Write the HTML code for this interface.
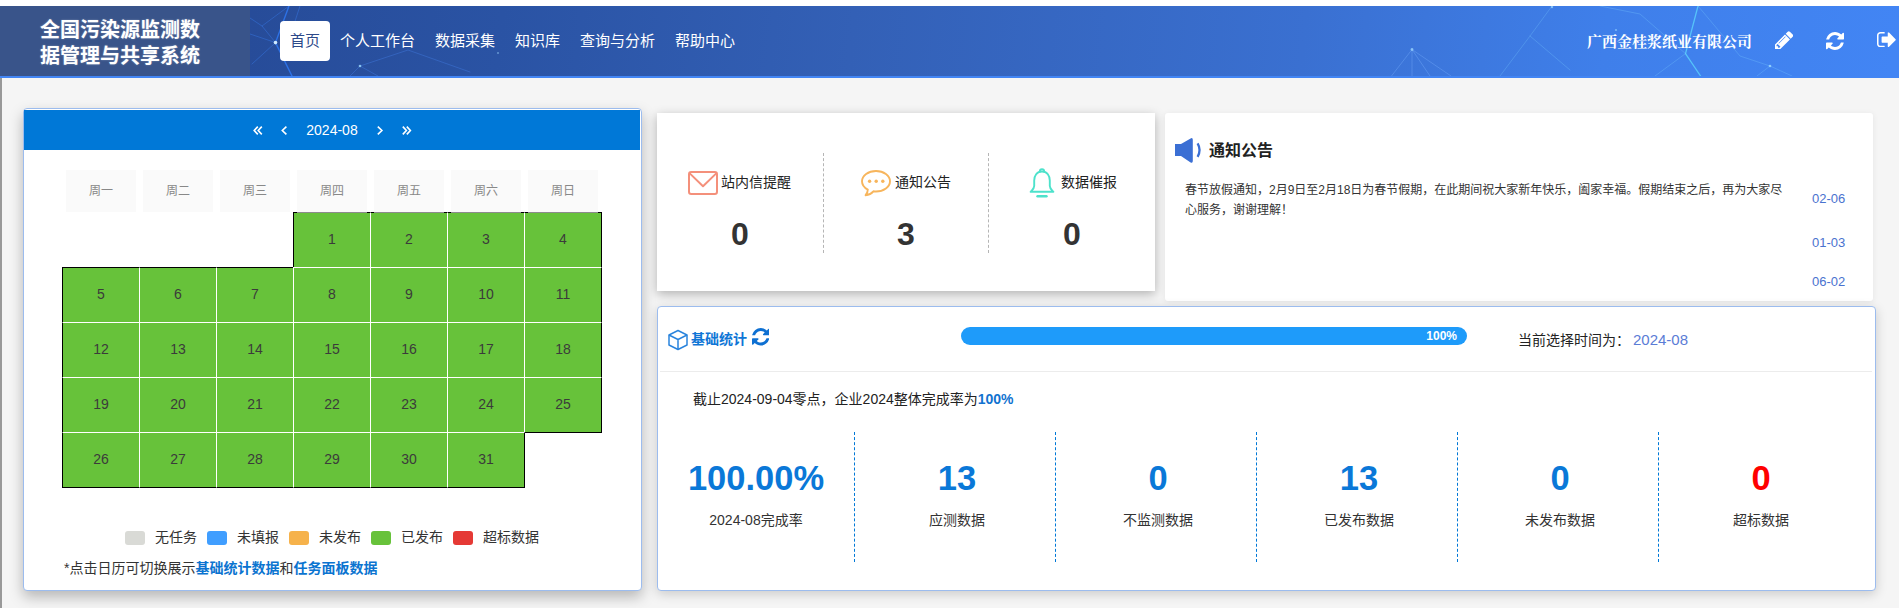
<!DOCTYPE html>
<html lang="zh-CN"><head><meta charset="utf-8"><title>全国污染源监测数据管理与共享系统</title>
<style>
*{box-sizing:border-box}
html,body{margin:0;padding:0}
body{width:1899px;height:608px;overflow:hidden;position:relative;background:#f5f5f5;
 font-family:"Liberation Sans","Noto Sans CJK SC",sans-serif;font-size:14px;color:#333}
.abs{position:absolute}
.topstrip{left:0;top:0;width:1899px;height:6px;background:#fff}
.header{left:0;top:6px;width:1899px;height:72px;border-bottom:2px solid #4285f4;
 background:linear-gradient(96deg,#274c99 250px,#2a53a4 500px,#3360b6 850px,#3a70d1 1300px,#3f7fea 1600px,#4285f4 1890px);overflow:hidden}
.logo{left:0;top:0;width:250px;height:70px;background:#39548a;color:#fff;font-weight:bold;font-size:20px;line-height:26px;
 padding:10.5px 0 0 40px;text-shadow:0 0 2px rgba(255,255,255,.35)}
.nav{top:15px;height:40px;line-height:40px;font-size:15px;color:#fff;text-align:center;white-space:nowrap}
.nav.on{background:#fff;color:#2d4a8a;border-radius:4px}
.company{left:1587px;top:24px;height:24px;line-height:24px;font-size:15px;font-weight:bold;color:#fff;white-space:nowrap;
 font-family:"Liberation Serif","Noto Serif CJK SC",serif}
.leftbar{left:0;top:78px;width:2px;height:530px;background:#999}
.cal{left:23px;top:108px;width:619px;height:483px;background:#fff;border:1px solid #9cbcee;border-radius:4px;
 box-shadow:0 6px 14px rgba(0,0,0,.26)}
.calhead{left:24px;top:110px;width:616px;height:40px;background:#0078d7}
.caltitle{left:306px;top:120px;width:52px;height:20px;line-height:20px;font-size:14px;color:#fff;text-align:center}
.wk{top:170px;width:70px;height:42px;line-height:42px;background:#fafafa;color:#888;font-size:12px;text-align:center}
.day{width:77px;height:55px;background:#67c23a;border:0 solid #fff;color:#3b3b3b;font-size:14px;line-height:52px;text-align:center}
.lg{top:531px;width:20px;height:14px;border-radius:3px}
.lgt{top:527px;height:20px;line-height:20px;font-size:14px;color:#333;white-space:nowrap}
.note{left:64px;top:557px;height:22px;line-height:22px;font-size:14px;color:#333;white-space:nowrap}
.note b{color:#0b74d0}
.card1{left:657px;top:113px;width:498px;height:178px;background:#fff;box-shadow:0 3px 10px rgba(0,0,0,.28)}
.vd{top:153px;width:0;height:100px;border-left:1px dashed #b5b5b5}
.c1t{top:171px;height:22px;line-height:22px;font-size:14px;color:#222;white-space:nowrap}
.c1n{top:214px;width:60px;height:40px;line-height:40px;font-size:32px;font-weight:bold;color:#333;text-align:center}
.card2{left:1165px;top:113px;width:708px;height:188px;background:#fff;border-radius:3px;box-shadow:0 1px 6px rgba(0,0,0,.07)}
.c2title{left:1209px;top:138.500px;height:24px;line-height:24px;font-size:16px;font-weight:bold;color:#222;white-space:nowrap}
.c2text{left:1185px;top:179.500px;width:606px;line-height:20px;font-size:12px;color:#333}
.c2d{left:1812px;height:18px;line-height:18px;font-size:13px;color:#4a72cf;white-space:nowrap}
.stat{left:657px;top:306px;width:1219px;height:285px;background:#fff;border:1px solid #9cbcee;border-radius:4px;
 box-shadow:0 3px 12px rgba(0,0,0,.18)}
.sthr{left:660px;top:371px;width:1212px;height:1px;background:#ececec}
.sttitle{left:691px;top:328px;height:22px;line-height:22px;font-size:14px;font-weight:bold;color:#1076d6;white-space:nowrap}
.prog{left:961px;top:327px;width:506px;height:18px;border-radius:9px;background:#1e9bfa}
.progt{left:1420px;top:327px;width:37px;height:18px;line-height:18px;font-size:12px;font-weight:bold;color:#fff;text-align:right}
.curt{left:1518px;top:329px;height:22px;line-height:22px;font-size:14px;color:#222;white-space:nowrap}
.curv{left:1633px;top:329px;height:22px;line-height:22px;font-size:15px;color:#5b7cd6;white-space:nowrap}
.sum{left:693px;top:387.500px;height:22px;line-height:22px;font-size:14px;color:#222;white-space:nowrap}
.sum b{color:#1273d0}
.sd{top:432px;width:0;height:130px;border-left:1px dashed #0078d7}
.sn{top:455.500px;width:200px;height:44px;line-height:44px;font-size:34.500px;font-weight:bold;color:#0a78d8;text-align:center;white-space:nowrap}
.sl{top:509px;width:200px;height:22px;line-height:22px;font-size:14px;color:#333;text-align:center;white-space:nowrap}
</style></head>
<body>
<div class="abs topstrip"></div>
<div class="abs header">
<svg class="abs" style="left:250px;top:0" width="1649" height="70" viewBox="250 0 1649 70">
<g fill="none" stroke-linecap="round">
<path stroke="#2f7dff" stroke-width="1.400" opacity=".75" d="M289 0 L275.500 36.600 L292 70"/>
<path stroke="#3d86ff" stroke-width="1" opacity=".35" d="M275.500 36.600 L250 28 M275.500 36.600 L252 58 M289 0 L262 20 L275.500 36.600 M300 0 L283 52 M262 20 L250 12"/>
<path stroke="#4b8dff" stroke-width="1" opacity=".3" d="M350 70 L360 60 L378 70 M360 60 L408 44 L470 66"/>
<path stroke="#7fb4ff" stroke-width="1" opacity=".35" d="M1391.500 70 L1412 43.500 L1451 70 M1412 43.500 L1412 70 M1412 43.500 L1430 70"/>
<path stroke="#5fe0ff" stroke-width="1.300" opacity=".7" d="M1698 0 L1685.500 47.600 L1700.600 70"/>
<path stroke="#7fd0ff" stroke-width="1" opacity=".28" d="M1685.500 47.600 L1640 8 L1600 0 M1685.500 47.600 L1655 70 M1698 0 L1740 50 L1770 60 M1770 60 L1757 70 M1770 60 L1792 70 M1552 0 L1530 30 L1500 70 M1530 30 L1570 64"/>
</g>
<g fill="#9fdcff"><circle cx="275.500" cy="36.600" r="1.800" fill="#cfeaff"/><circle cx="360" cy="60" r="1.300" opacity=".8"/><circle cx="1412" cy="43.500" r="1.400" opacity=".7"/><circle cx="1770" cy="60" r="1.300" opacity=".8"/><circle cx="1552" cy="1" r="1.200" opacity=".7"/><circle cx="1616" cy="24" r="1.100" opacity=".6"/><circle cx="498" cy="47" r="1" opacity=".5"/></g>
</svg>
<div class="abs logo">全国污染源监测数<br>据管理与共享系统</div>
<div class="abs nav on" style="left:280px;width:50px">首页</div>
<div class="abs nav" style="left:330px;width:95px">个人工作台</div>
<div class="abs nav" style="left:425px;width:80px">数据采集</div>
<div class="abs nav" style="left:505px;width:65px">知识库</div>
<div class="abs nav" style="left:570px;width:95px">查询与分析</div>
<div class="abs nav" style="left:665px;width:80px">帮助中心</div>
<div class="abs company">广西金桂浆纸业有限公司</div>
<svg class="abs" style="left:1775px;top:25px" width="18.400" height="18.400" viewBox="0 0 1536 1536"><path fill="#fff" d="M363 1408l91-91-235-235-91 91v107h128v128h107zm523-928q0-22-22-22-10 0-17 7L305 1007q-7 7-7 17 0 22 22 22 10 0 17-7l542-542q7-7 7-17zm-54-192l416 416-832 832H0v-416zm683 96q0 53-37 90l-166 166-416-416 166-165q36-38 90-38 53 0 91 38l235 234q37 39 37 91z"/></svg>
<svg class="abs" style="left:1825.800px;top:25.500px" width="18" height="18" viewBox="0 0 1536 1536"><path fill="#fff" d="M1511 928q0 5-1 7-64 268-268 434.500T764 1536q-146 0-282.500-55T238 1324l-129 129q-19 19-45 19t-45-19-19-45V960q0-26 19-45t45-19h448q26 0 45 19t19 45-19 45l-137 137q71 66 161 102t187 36q134 0 250-65t186-179q11-17 53-117 8-23 30-23h192q13 0 22.500 9.500t9.500 22.500zm25-800v448q0 26-19 45t-45 19h-448q-26 0-45-19t-19-45 19-45l138-138Q969 256 768 256q-134 0-250 65T332 500q-11 17-53 117-8 23-30 23H50q-13 0-22.500-9.500T18 608v-7q65-268 270-434.500T768 0q146 0 284 55.500T1297 212l130-129q19-19 45-19t45 19 19 45z"/></svg>
<svg class="abs" style="left:1876.800px;top:26px" width="18.800" height="15.350" viewBox="0 0 1568 1280"><path fill="#fff" d="M640 1184q0 4 1 20t.500 26.500-3 23.500-10 19.500-20.500 6.500H288q-119 0-203.500-84.500T0 992V288Q0 169 84.500 84.500T288 0h320q13 0 22.500 9.500T640 32q0 4 1 20t.500 26.500-3 23.500-10 19.500-20.500 6.500H288q-66 0-113 47t-47 113v704q0 66 47 113t113 47h312l11.500 1 11.500 3 8 5.500 7 9 2 13.500zm928-544q0 26-19 45l-544 544q-19 19-45 19t-45-19-19-45V896H448q-26 0-45-19t-19-45V448q0-26 19-45t45-19h448V96q0-26 19-45t45-19 45 19l544 544q19 19 19 45z"/></svg>
</div>
<div class="abs leftbar"></div>
<div class="abs cal"></div><div class="abs calhead"></div>
<svg class="abs" style="left:250px;top:122px" width="170" height="16" viewBox="0 0 170 16" fill="none" stroke="#fff" stroke-width="1.600">
<path d="M7.800 4.600 L4.200 8.500 L7.800 12.400 M11.800 4.600 L8.200 8.500 L11.800 12.400"/>
<path d="M36.400 4.600 L32.300 8.500 L36.400 12.400"/>
<path d="M127.800 4.600 L131.900 8.500 L127.800 12.400"/>
<path d="M152.800 4.600 L156.400 8.500 L152.800 12.400 M156.800 4.600 L160.400 8.500 L156.800 12.400"/>
</svg>
<div class="abs caltitle">2024-08</div>
<div class="abs wk" style="left:66px">周一</div>
<div class="abs wk" style="left:143px">周二</div>
<div class="abs wk" style="left:220px">周三</div>
<div class="abs wk" style="left:297px">周四</div>
<div class="abs wk" style="left:374px">周五</div>
<div class="abs wk" style="left:451px">周六</div>
<div class="abs wk" style="left:528px">周日</div>
<div class="abs day" style="left:293px;top:212px;border-left:1px solid #000;border-top:1px solid #000;">1</div>
<div class="abs day" style="left:370px;top:212px;border-left:1px solid #fff;border-top:1px solid #000;">2</div>
<div class="abs day" style="left:447px;top:212px;border-left:1px solid #fff;border-top:1px solid #000;">3</div>
<div class="abs day" style="left:524px;top:212px;border-left:1px solid #fff;border-top:1px solid #000;border-right:1px solid #000;width:78px;">4</div>
<div class="abs day" style="left:62px;top:267px;border-left:1px solid #000;border-top:1px solid #000;">5</div>
<div class="abs day" style="left:139px;top:267px;border-left:1px solid #fff;border-top:1px solid #000;">6</div>
<div class="abs day" style="left:216px;top:267px;border-left:1px solid #fff;border-top:1px solid #000;">7</div>
<div class="abs day" style="left:293px;top:267px;border-left:1px solid #fff;border-top:1px solid #fff;">8</div>
<div class="abs day" style="left:370px;top:267px;border-left:1px solid #fff;border-top:1px solid #fff;">9</div>
<div class="abs day" style="left:447px;top:267px;border-left:1px solid #fff;border-top:1px solid #fff;">10</div>
<div class="abs day" style="left:524px;top:267px;border-left:1px solid #fff;border-top:1px solid #fff;border-right:1px solid #000;width:78px;">11</div>
<div class="abs day" style="left:62px;top:322px;border-left:1px solid #000;border-top:1px solid #fff;">12</div>
<div class="abs day" style="left:139px;top:322px;border-left:1px solid #fff;border-top:1px solid #fff;">13</div>
<div class="abs day" style="left:216px;top:322px;border-left:1px solid #fff;border-top:1px solid #fff;">14</div>
<div class="abs day" style="left:293px;top:322px;border-left:1px solid #fff;border-top:1px solid #fff;">15</div>
<div class="abs day" style="left:370px;top:322px;border-left:1px solid #fff;border-top:1px solid #fff;">16</div>
<div class="abs day" style="left:447px;top:322px;border-left:1px solid #fff;border-top:1px solid #fff;">17</div>
<div class="abs day" style="left:524px;top:322px;border-left:1px solid #fff;border-top:1px solid #fff;border-right:1px solid #000;width:78px;">18</div>
<div class="abs day" style="left:62px;top:377px;border-left:1px solid #000;border-top:1px solid #fff;">19</div>
<div class="abs day" style="left:139px;top:377px;border-left:1px solid #fff;border-top:1px solid #fff;">20</div>
<div class="abs day" style="left:216px;top:377px;border-left:1px solid #fff;border-top:1px solid #fff;">21</div>
<div class="abs day" style="left:293px;top:377px;border-left:1px solid #fff;border-top:1px solid #fff;">22</div>
<div class="abs day" style="left:370px;top:377px;border-left:1px solid #fff;border-top:1px solid #fff;">23</div>
<div class="abs day" style="left:447px;top:377px;border-left:1px solid #fff;border-top:1px solid #fff;">24</div>
<div class="abs day" style="left:524px;top:377px;border-left:1px solid #fff;border-top:1px solid #fff;border-right:1px solid #000;width:78px;border-bottom:1px solid #000;height:56px;">25</div>
<div class="abs day" style="left:62px;top:432px;border-left:1px solid #000;border-top:1px solid #fff;border-bottom:1px solid #000;height:56px;">26</div>
<div class="abs day" style="left:139px;top:432px;border-left:1px solid #fff;border-top:1px solid #fff;border-bottom:1px solid #000;height:56px;">27</div>
<div class="abs day" style="left:216px;top:432px;border-left:1px solid #fff;border-top:1px solid #fff;border-bottom:1px solid #000;height:56px;">28</div>
<div class="abs day" style="left:293px;top:432px;border-left:1px solid #fff;border-top:1px solid #fff;border-bottom:1px solid #000;height:56px;">29</div>
<div class="abs day" style="left:370px;top:432px;border-left:1px solid #fff;border-top:1px solid #fff;border-bottom:1px solid #000;height:56px;">30</div>
<div class="abs day" style="left:447px;top:432px;border-left:1px solid #fff;border-top:1px solid #fff;border-right:1px solid #000;width:78px;border-bottom:1px solid #000;height:56px;">31</div>
<div class="abs" style="left:297px;top:212px;width:70px;height:1px;background:#8c8c8c;z-index:3"></div>
<div class="abs" style="left:374px;top:212px;width:70px;height:1px;background:#8c8c8c;z-index:3"></div>
<div class="abs" style="left:451px;top:212px;width:70px;height:1px;background:#8c8c8c;z-index:3"></div>
<div class="abs" style="left:528px;top:212px;width:70px;height:1px;background:#8c8c8c;z-index:3"></div>
<div class="abs lg" style="left:125px;background:#d9dad6"></div><div class="abs lgt" style="left:155px">无任务</div>
<div class="abs lg" style="left:207px;background:#409eff"></div><div class="abs lgt" style="left:237px">未填报</div>
<div class="abs lg" style="left:289px;background:#f6b24b"></div><div class="abs lgt" style="left:319px">未发布</div>
<div class="abs lg" style="left:371px;background:#67c23a"></div><div class="abs lgt" style="left:401px">已发布</div>
<div class="abs lg" style="left:453px;background:#e53935"></div><div class="abs lgt" style="left:483px">超标数据</div>
<div class="abs note">*点击日历可切换展示<b>基础统计数据</b>和<b>任务面板数据</b></div>
<div class="abs card1"></div>
<div class="abs vd" style="left:823px"></div><div class="abs vd" style="left:988px"></div>
<svg class="abs" style="left:688px;top:171px" width="30" height="24" viewBox="0 0 30 24" fill="none" stroke="#f4907b" stroke-width="2" stroke-linejoin="round" stroke-linecap="round">
<rect x="1" y="1" width="28" height="22" rx="2.200"/><path d="M2 2.600 L15 15.200 L28 2.600"/></svg>
<div class="abs c1t" style="left:721px">站内信提醒</div>
<svg class="abs" style="left:860px;top:168px" width="32" height="30" viewBox="0 0 32 30" fill="none" stroke="#f7b55c" stroke-width="1.900" stroke-linejoin="round">
<path d="M16 3 C8.300 3 2 7.600 2 13.300 C2 16.800 4.300 19.800 7.800 21.600 C7.800 23.600 6.900 25.700 5.600 27.200 C9 26.900 11.800 25.200 13.400 23.300 C14.200 23.400 15.100 23.500 16 23.500 C23.700 23.500 30 18.900 30 13.300 C30 7.600 23.700 3 16 3 Z"/>
<g fill="#f7b55c" stroke="none"><circle cx="9.600" cy="13.200" r="1.700"/><circle cx="16.200" cy="13.200" r="1.700"/><circle cx="22.800" cy="13.200" r="1.700"/></g></svg>
<div class="abs c1t" style="left:895px">通知公告</div>
<svg class="abs" style="left:1028px;top:167px" width="28" height="32" viewBox="0 0 28 32" fill="none" stroke="#4de2cb" stroke-width="1.900" stroke-linejoin="round" stroke-linecap="round">
<path d="M14 4.500 C8.800 4.500 6.200 8.800 6.200 13.500 L6.200 19 C6.200 21.500 4.200 23 2.600 24.800 L25.400 24.800 C23.800 23 21.800 21.500 21.800 19 L21.800 13.500 C21.800 8.800 19.200 4.500 14 4.500 Z"/>
<path d="M11.800 4.600 C11.800 1.400 16.200 1.400 16.200 4.600"/><path d="M9.500 29.300 L18.500 29.300" stroke-width="2.400"/></svg>
<div class="abs c1t" style="left:1061px">数据催报</div>
<div class="abs c1n" style="left:710px">0</div>
<div class="abs c1n" style="left:876px">3</div>
<div class="abs c1n" style="left:1042px">0</div>
<div class="abs card2"></div>
<svg class="abs" style="left:1174px;top:137px" width="30" height="28" viewBox="0 0 30 28">
<path fill="#3b6fd4" d="M1 6.900 L7 6.900 L16.600 1.400 Q18.800 0.400 18.800 2.800 L18.800 24 Q18.800 26.400 16.600 25.400 L7 19 L1 19 Z"/>
<path fill="none" stroke="#3b6fd4" stroke-width="2.300" d="M23.600 6.400 C26 10.500 26 15.700 23.600 19.800"/></svg>
<div class="abs c2title">通知公告</div>
<div class="abs c2text">春节放假通知，2月9日至2月18日为春节假期，在此期间祝大家新年快乐，阖家幸福。假期结束之后，再为大家尽心服务，谢谢理解！</div>
<div class="abs c2d" style="top:190px">02-06</div>
<div class="abs c2d" style="top:234px">01-03</div>
<div class="abs c2d" style="top:273px">06-02</div>
<div class="abs stat"></div><div class="abs sthr"></div>
<svg class="abs" style="left:667px;top:329px" width="22" height="22" viewBox="0 0 22 22" fill="none" stroke="#2a84dd" stroke-width="1.500" stroke-linejoin="round">
<path d="M11 1.500 L20 6 L20 16 L11 20.500 L2 16 L2 6 Z"/><path d="M2 6 L11 10.500 L20 6 M11 10.500 L11 20.500"/></svg>
<div class="abs sttitle">基础统计</div>
<svg class="abs" style="left:751.800px;top:328px" width="17.500" height="17.500" viewBox="0 0 1536 1536"><path fill="#0e70d2" d="M1511 928q0 5-1 7-64 268-268 434.500T764 1536q-146 0-282.500-55T238 1324l-129 129q-19 19-45 19t-45-19-19-45V960q0-26 19-45t45-19h448q26 0 45 19t19 45-19 45l-137 137q71 66 161 102t187 36q134 0 250-65t186-179q11-17 53-117 8-23 30-23h192q13 0 22.500 9.500t9.500 22.500zm25-800v448q0 26-19 45t-45 19h-448q-26 0-45-19t-19-45 19-45l138-138Q969 256 768 256q-134 0-250 65T332 500q-11 17-53 117-8 23-30 23H50q-13 0-22.500-9.500T18 608v-7q65-268 270-434.500T768 0q146 0 284 55.500T1297 212l130-129q19-19 45-19t45 19 19 45z"/></svg>
<div class="abs prog"></div><div class="abs progt">100%</div>
<div class="abs curt">当前选择时间为：</div><div class="abs curv">2024-08</div>
<div class="abs sum">截止2024-09-04零点，企业2024整体完成率为<b>100%</b></div>
<div class="abs sd" style="left:854px"></div>
<div class="abs sd" style="left:1055px"></div>
<div class="abs sd" style="left:1256px"></div>
<div class="abs sd" style="left:1457px"></div>
<div class="abs sd" style="left:1658px"></div>
<div class="abs sn" style="left:656px;">100.00%</div>
<div class="abs sl" style="left:656px;">2024-08完成率</div>
<div class="abs sn" style="left:857px;">13</div>
<div class="abs sl" style="left:857px;">应测数据</div>
<div class="abs sn" style="left:1058px;">0</div>
<div class="abs sl" style="left:1058px;">不监测数据</div>
<div class="abs sn" style="left:1259px;">13</div>
<div class="abs sl" style="left:1259px;">已发布数据</div>
<div class="abs sn" style="left:1460px;">0</div>
<div class="abs sl" style="left:1460px;">未发布数据</div>
<div class="abs sn" style="left:1661px;color:#f00">0</div>
<div class="abs sl" style="left:1661px;">超标数据</div>
</body></html>
